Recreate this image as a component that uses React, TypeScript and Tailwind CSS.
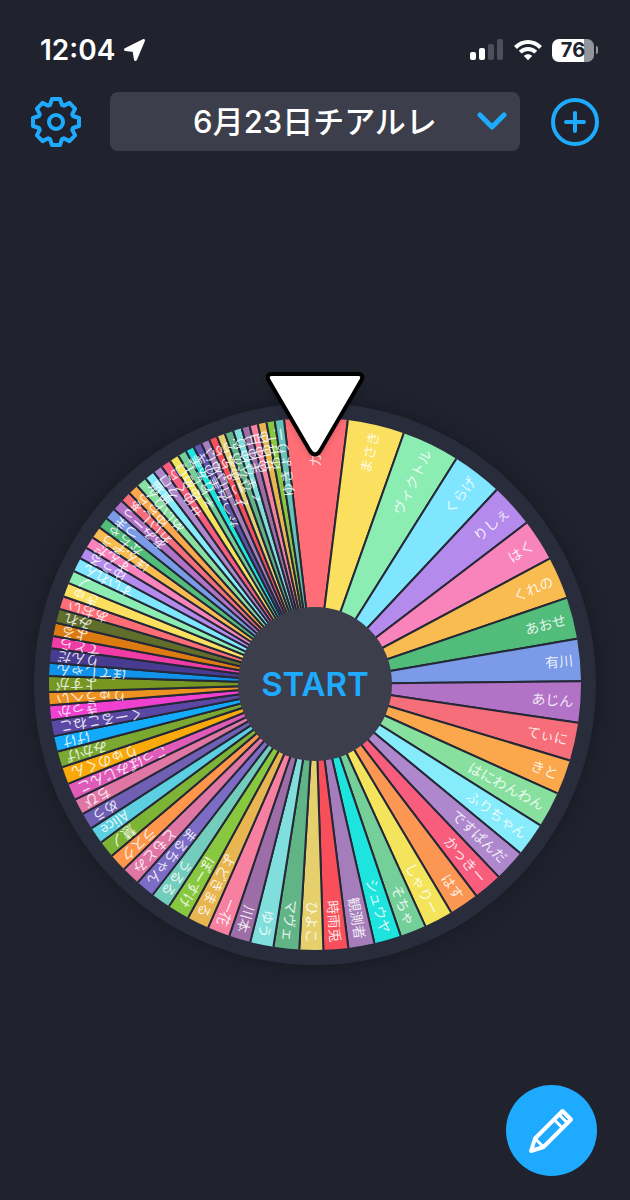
type Slice = { end: number; color: string; label: string };

const FIRST_ANGLE = -6.7;
const RADIUS = 266;

const slices: Slice[] = [
  { end: 7.1, color: "#ff6e76", label: "カイト" },
  { end: 19.5, color: "#fbe05f", label: "まさき" },
  { end: 32.1, color: "#8bedb2", label: "ヴィクトル" },
  { end: 43.1, color: "#80e5ff", label: "くらげ" },
  { end: 52.7, color: "#b48bed", label: "りしぇ" },
  { end: 61.9, color: "#f984bb", label: "はく" },
  { end: 71.1, color: "#f9bc50", label: "くれの" },
  { end: 80.2, color: "#52bc7b", label: "あおせ" },
  { end: 89.4, color: "#7b9be8", label: "有川" },
  { end: 98.4, color: "#b272c6", label: "あじん" },
  { end: 106.7, color: "#f66e79", label: "てぃに" },
  { end: 114.3, color: "#fba84c", label: "きと" },
  { end: 122.1, color: "#88e09e", label: "はにわんわん" },
  { end: 129.5, color: "#86ecfb", label: "ふりちゃん" },
  { end: 136.4, color: "#ae87cd", label: "ですぱんだ" },
  { end: 142.7, color: "#f95d7e", label: "かっきー" },
  { end: 149.2, color: "#fb9753", label: "はす" },
  { end: 155.5, color: "#f3e45c", label: "しゃりー" },
  { end: 161.2, color: "#74cf99", label: "そちゃ" },
  { end: 167.1, color: "#1de5de", label: "シュウヤ" },
  { end: 172.8, color: "#a67dbb", label: "観測者" },
  { end: 178.2, color: "#f84f5a", label: "時雨兎" },
  { end: 183.4, color: "#e5d06d", label: "ひよこ" },
  { end: 189, color: "#60b486", label: "マヴェ" },
  { end: 194.1, color: "#80dfdc", label: "ゆう" },
  { end: 198.8, color: "#9d6da8", label: "川本" },
  { end: 203.7, color: "#f77f9f", label: "一花" },
  { end: 208.5, color: "#e8b650", label: "よどきまる" },
  { end: 213.3, color: "#88c83f", label: "ぽーすけ" },
  { end: 217.6, color: "#72cdbc", label: "うるる" },
  { end: 221.8, color: "#7c6cc5", label: "まるちゃん" },
  { end: 225.9, color: "#df76a4", label: "ともとみ" },
  { end: 229.8, color: "#ff964c", label: "ラスク" },
  { end: 233.5, color: "#7eb435", label: "慧ノ" },
  { end: 237.2, color: "#5ccfe0", label: "Alice" },
  { end: 240.8, color: "#6f60b4", label: "めう" },
  { end: 244.3, color: "#df76a4", label: "ちび" },
  { end: 248, color: "#e05bb8", label: "こっぱみじんこ" },
  { end: 251.8, color: "#faa90b", label: "りゅのくん" },
  { end: 255.3, color: "#7aa831", label: "みかげ" },
  { end: 258.7, color: "#12aafb", label: "げけ" },
  { end: 262.2, color: "#5b48a4", label: "くーるこねこ" },
  { end: 265.4, color: "#f040d0", label: "きっか" },
  { end: 268.3, color: "#ed9120", label: "りゅうへい" },
  { end: 271.7, color: "#769722", label: "よすが" },
  { end: 274.6, color: "#0f92e8", label: "ぽてしゃん" },
  { end: 277.7, color: "#493c90", label: "りんだ" },
  { end: 280.4, color: "#f03da6", label: "てとら" },
  { end: 283.3, color: "#db7b12", label: "よる" },
  { end: 286.4, color: "#616d2b", label: "みれ" },
  { end: 289.2, color: "#ff6e76", label: "あおい" },
  { end: 292.3, color: "#fbe05f", label: "きゅ" },
  { end: 295.1, color: "#8bedb2", label: "ノ" },
  { end: 298.2, color: "#80e5ff", label: "すいれん" },
  { end: 300.8, color: "#b48bed", label: "ゆうる" },
  { end: 303.4, color: "#f984bb", label: "すんだ" },
  { end: 306, color: "#f9bc50", label: "ぽんぞう" },
  { end: 308.5, color: "#52bc7b", label: "なちゃ" },
  { end: 311, color: "#7b9be8", label: "つま" },
  { end: 313.5, color: "#b272c6", label: "あみーっ" },
  { end: 315.8, color: "#f66e79", label: "れいしぁ" },
  { end: 318.1, color: "#fba84c", label: "ゆらら" },
  { end: 320.5, color: "#88e09e", label: "めいりん" },
  { end: 322.7, color: "#86ecfb", label: "黒猫" },
  { end: 324.8, color: "#ae87cd", label: "クロ" },
  { end: 327, color: "#f95d7e", label: "せゆくら" },
  { end: 329.1, color: "#f3e45c", label: "ゆめロ" },
  { end: 331, color: "#74cf99", label: "そらにじ" },
  { end: 332.9, color: "#1de5de", label: "りあ美" },
  { end: 334.7, color: "#5f55ad", label: "なつみ美ゆき" },
  { end: 336.6, color: "#a67dbb", label: "ロいぬい" },
  { end: 338.4, color: "#f84f5a", label: "よっすらら" },
  { end: 340.2, color: "#e5d06d", label: "くーゆみら" },
  { end: 342.1, color: "#60b486", label: "ひなのん" },
  { end: 344, color: "#80dfdc", label: "くまひゆり" },
  { end: 345.8, color: "#9d6da8", label: "まゆり" },
  { end: 347.6, color: "#f77f9f", label: "ゆゆ月" },
  { end: 349.5, color: "#e8b650", label: "せゆゆ" },
  { end: 351.3, color: "#88c83f", label: "ゆせし" },
  { end: 353.3, color: "#65c4b7", label: "ゆきょりー" },
];

function point(angle: number, radius: number) {
  const a = (angle * Math.PI) / 180;
  return `${(Math.sin(a) * radius).toFixed(2)} ${(-Math.cos(a) * radius).toFixed(2)}`;
}

function Wheel() {
  return (
    <svg viewBox="-281 -281 562 562" className="block w-full rounded-full bg-[#292c3b] shadow-[0_0_24px_rgba(0,0,0,0.3)]" role="img" aria-label="ルーレット">
      {slices.map((s, i) => {
        const start = i === 0 ? FIRST_ANGLE : slices[i - 1].end;
        const middle = (start + s.end) / 2;
        return (
          <g key={i}>
            <path
              d={`M0 0L${point(start, RADIUS)}A${RADIUS} ${RADIUS} 0 0 1 ${point(s.end, RADIUS)}Z`}
              fill={s.color}
            />
            <path
              d={`M0 0L${point(start, RADIUS)}M0 0L${point(s.end, RADIUS)}`}
              stroke="#252837"
              strokeWidth="2"
            />
            <text
              transform={`rotate(${middle - 90})`}
              x="259"
              y="5"
              textAnchor="end"
              fill="#ffffff"
              fillOpacity="0.85"
              className="font-['Noto_Sans_CJK_JP',sans-serif] text-[14px] font-normal"
            >
              {s.label}
            </text>
          </g>
        );
      })}
    </svg>
  );
}

function gearPath() {
  const tooth = [
    [-6, -17],
    [-4, -23],
    [4, -23],
    [6, -17],
  ];
  const points: string[] = [];
  for (let i = 0; i < 8; i++) {
    const a = (i * Math.PI) / 4;
    for (const [x, y] of tooth) {
      points.push(
        `${(x * Math.cos(a) - y * Math.sin(a)).toFixed(2)} ${(x * Math.sin(a) + y * Math.cos(a)).toFixed(2)}`,
      );
    }
  }
  return `M${points.join("L")}Z`;
}

function StatusBar() {
  return (
    <div className="flex h-[92px] items-center justify-between pt-2 pr-8 pl-10">
      <div className="flex items-center gap-2 text-white">
        <span className="font-[Inter,sans-serif] text-[28px] leading-8 font-semibold">12:04</span>
        <svg viewBox="0 0 24 24" className="h-6 w-6" fill="#fff" stroke="#fff" strokeWidth="3" strokeLinejoin="round" aria-hidden="true">
          <path d="M20.500 2.500L2.500 11.500L11 12.500L12.500 21.500Z" />
        </svg>
      </div>
      <div className="flex items-center gap-[10px]">
        <svg viewBox="0 0 34 22" className="h-[22px] w-[34px]" aria-hidden="true">
          <rect x="0" y="13" width="6" height="8" rx="2" fill="#fff" />
          <rect x="9" y="9" width="6" height="12" rx="2" fill="#fff" />
          <rect x="18" y="5" width="6" height="16" rx="2" fill="#4d4f5a" />
          <rect x="27" y="0" width="6" height="21" rx="2" fill="#4d4f5a" />
        </svg>
        <svg viewBox="0 0 28 22" className="h-[22px] w-7" fill="none" stroke="#fff" strokeWidth="4" aria-hidden="true">
          <path d="M1.500 8.500C8.500 1.200 19.500 1.200 26.500 8.500" />
          <path d="M6.200 13.200C10.500 8.900 17.500 8.900 21.800 13.200" />
          <path d="M9.800 17C12 14.800 16 14.800 18.200 17L14 21.300Z" fill="#fff" stroke="none" />
        </svg>
        <div className="flex items-center gap-[2px]">
          <div className="flex h-[23px] w-[42px] items-center justify-center rounded-[7px] bg-linear-to-r from-white from-76% to-[#94959b] to-76% font-[Inter,sans-serif] text-[20px] leading-none font-bold text-[#20222e]">
            76
          </div>
          <div className="h-2 w-[2px] rounded-r bg-[#94959b]" />
        </div>
      </div>
    </div>
  );
}

function Toolbar() {
  return (
    <header className="flex items-center justify-between gap-7 px-[30px]">
      <button type="button" aria-label="設定" className="h-[52px] w-[52px] shrink-0">
        <svg viewBox="-26 -26 52 52" className="h-full w-full" fill="none" stroke="#1eaaff" strokeWidth="4" strokeLinejoin="round">
          <path d={gearPath()} />
          <circle r="7" />
        </svg>
      </button>
      <div className="relative flex-1">
        <select
          aria-label="ルーレットを選択"
          className="h-[59px] w-full appearance-none rounded-lg bg-[#3c3f4b] text-center font-[Inter,'Noto_Sans_CJK_JP',sans-serif] text-[31px] leading-10 font-medium text-white [text-align-last:center]"
        >
          <option>6月23日チアルレ</option>
        </select>
        <svg viewBox="0 0 30 20" className="pointer-events-none absolute top-5 right-[13px] h-5 w-[30px]" fill="none" stroke="#1eaaff" strokeWidth="5" strokeLinecap="round" strokeLinejoin="round" aria-hidden="true">
          <path d="M3 3L15 15L27 3" />
        </svg>
      </div>
      <button type="button" aria-label="追加" className="h-[52px] w-[52px] shrink-0">
        <svg viewBox="-27 -26 52 52" className="h-full w-full" fill="none" stroke="#1eaaff" strokeWidth="4" strokeLinecap="round">
          <circle r="22" />
          <path d="M-9 0H9M0 -9V9" />
        </svg>
      </button>
    </header>
  );
}

export default function App() {
  return (
    <div className="flex min-h-screen flex-col bg-[#20222e]">
      <StatusBar />
      <Toolbar />
      <main className="flex flex-1 items-center justify-center px-[34px] pt-[132px]">
        <div className="relative w-full">
          <Wheel />
          <button
            type="button"
            className="absolute inset-0 m-auto flex aspect-square w-[154px] items-center justify-center rounded-full bg-[#3c3f4b] font-[Inter,sans-serif] text-[33px] leading-none font-semibold text-[#1eaaff]"
          >
            START
          </button>
          <svg viewBox="0 0 102 88" className="absolute -top-8 left-1/2 h-[88px] w-[102px] -translate-x-1/2 drop-shadow-md" aria-hidden="true">
            <path d="M8 3H94Q100 3 97.500 9L56 80Q51 87 46 80L4.500 9Q2 3 8 3Z" fill="#fff" stroke="#000" strokeWidth="4" strokeLinejoin="round" />
          </svg>
        </div>
      </main>
      <footer className="flex justify-end pr-[33px] pb-6">
        <button type="button" aria-label="編集" className="flex h-[91px] w-[91px] items-center justify-center rounded-full bg-[#1eaaff]">
          <svg viewBox="1 1 48 48" className="h-12 w-12" fill="none" stroke="#fff" strokeWidth="4" strokeLinejoin="round" aria-hidden="true">
            <path d="M4 45L8 32.500L35.500 5L44 13.500L16.500 41Z" />
            <path d="M8 32.500L16.500 41M27 13.500L35.500 22M32 8.500L40.500 17" strokeWidth="3" />
          </svg>
        </button>
      </footer>
    </div>
  );
}
